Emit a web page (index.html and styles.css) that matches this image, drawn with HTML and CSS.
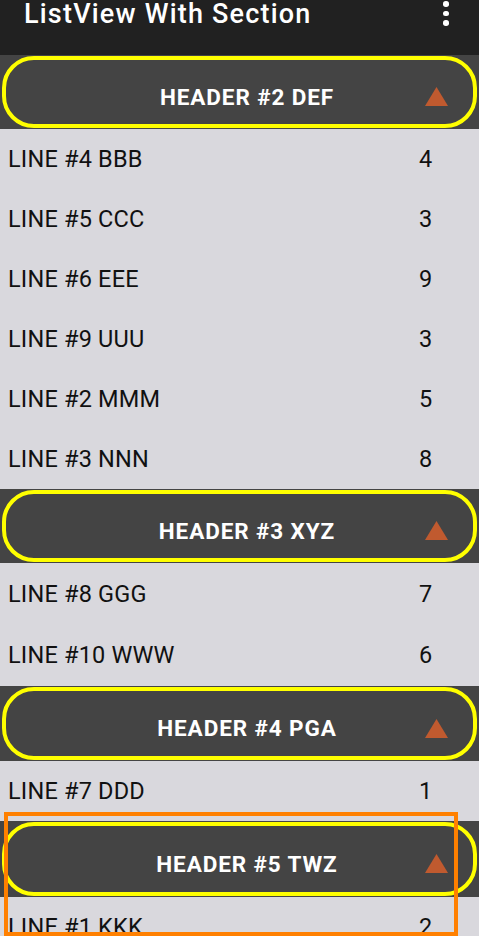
FILE: index.html
```html
<!DOCTYPE html>
<html lang="en">
<head>
<meta charset="utf-8">
<title>ListView With Section</title>
<link rel="stylesheet" href="styles.css">
</head>
<body>
<div class="screen">
  <header class="appbar">
    <h1 class="appbar-title">ListView With Section</h1>
    <div class="appbar-menu" aria-label="More options">
      <span class="dot"></span><span class="dot"></span><span class="dot"></span>
    </div>
  </header>

  <section class="section">
    <div class="section-head">
      <div class="pill">
        <span class="pill-text">HEADER #2 DEF</span>
        <svg class="pill-arrow" viewBox="0 0 23 19" width="23" height="19"><polygon points="11.5,0 23,19 0,19" fill="#c05a2f"/></svg>
      </div>
    </div>
    <div class="row"><span class="row-name">LINE #4 BBB</span><span class="row-num">4</span></div>
    <div class="row"><span class="row-name">LINE #5 CCC</span><span class="row-num">3</span></div>
    <div class="row"><span class="row-name">LINE #6 EEE</span><span class="row-num">9</span></div>
    <div class="row"><span class="row-name">LINE #9 UUU</span><span class="row-num">3</span></div>
    <div class="row"><span class="row-name">LINE #2 MMM</span><span class="row-num">5</span></div>
    <div class="row"><span class="row-name">LINE #3 NNN</span><span class="row-num">8</span></div>
  </section>

  <section class="section section-b">
    <div class="section-head">
      <div class="pill">
        <span class="pill-text">HEADER #3 XYZ</span>
        <svg class="pill-arrow" viewBox="0 0 23 19" width="23" height="19"><polygon points="11.5,0 23,19 0,19" fill="#c05a2f"/></svg>
      </div>
    </div>
    <div class="row"><span class="row-name">LINE #8 GGG</span><span class="row-num">7</span></div>
    <div class="row"><span class="row-name">LINE #10 WWW</span><span class="row-num">6</span></div>
  </section>

  <section class="section section-c">
    <div class="section-head">
      <div class="pill">
        <span class="pill-text">HEADER #4 PGA</span>
        <svg class="pill-arrow" viewBox="0 0 23 19" width="23" height="19"><polygon points="11.5,0 23,19 0,19" fill="#c05a2f"/></svg>
      </div>
    </div>
    <div class="row"><span class="row-name">LINE #7 DDD</span><span class="row-num">1</span></div>
  </section>

  <section class="section section-d">
    <div class="section-head">
      <div class="pill">
        <span class="pill-text">HEADER #5 TWZ</span>
        <svg class="pill-arrow" viewBox="0 0 23 19" width="23" height="19"><polygon points="11.5,0 23,19 0,19" fill="#c05a2f"/></svg>
      </div>
    </div>
    <div class="row"><span class="row-name">LINE #1 KKK</span><span class="row-num">2</span></div>
  </section>

  <div class="highlight"></div>
</div>
</body>
</html>
```

FILE: styles.css
```css
* { box-sizing: border-box; }

html, body {
  margin: 0;
  padding: 0;
}

body {
  background: #d9d8dd;
  font-family: Roboto, "Liberation Sans", sans-serif;
  overflow: hidden;
  height: 936px;
}

.screen {
  position: relative;
  width: 479px;
  height: 936px;
  overflow: hidden;
}

.appbar {
  height: 55px;
  background: #212121;
  display: flex;
  justify-content: space-between;
  align-items: flex-start;
  padding: 0 0 0 24px;
}

.appbar-title {
  margin: 0;
  color: #ffffff;
  font-size: 27px;
  line-height: 28px;
  font-weight: 500;
  letter-spacing: 1.2px;
}

.appbar-menu {
  display: flex;
  flex-direction: column;
  align-items: center;
  gap: 4px;
  width: 20px;
  margin: 1px 23px 0 0;
}

.dot {
  width: 5.5px;
  height: 5.5px;
  border-radius: 50%;
  background: #ffffff;
}

.section-head {
  height: 74px;
  background: #444444;
  padding: 1px 2px 1px 2px;
}

.section-c .section-head { height: 75px; }
.section-d .section-head { height: 76px; }

.pill {
  height: 100%;
  border: 4px solid #ffff00;
  border-radius: 32px;
  background: #444444;
  display: flex;
  align-items: center;
  padding-top: 9px;
}

.pill-text {
  flex: 1;
  text-align: center;
  padding-left: 63px;
  color: #ffffff;
  font-weight: 700;
  font-size: 22.5px;
  letter-spacing: 0.9px;
}

.pill-arrow {
  flex: none;
  margin-right: 25px;
  display: block;
}

.row {
  height: 60px;
  display: flex;
  align-items: center;
  padding-left: 8px;
  color: #111111;
  font-size: 23.5px;
  letter-spacing: 0.2px;
}

.section-b .row { height: 61.5px; }

.row-name {
  flex: 1;
}

.row-num {
  width: 60px;
  flex: none;
}

.highlight {
  position: absolute;
  left: 4px;
  top: 812px;
  width: 454px;
  height: 124px;
  border: 4px solid #ff8000;
}
```
